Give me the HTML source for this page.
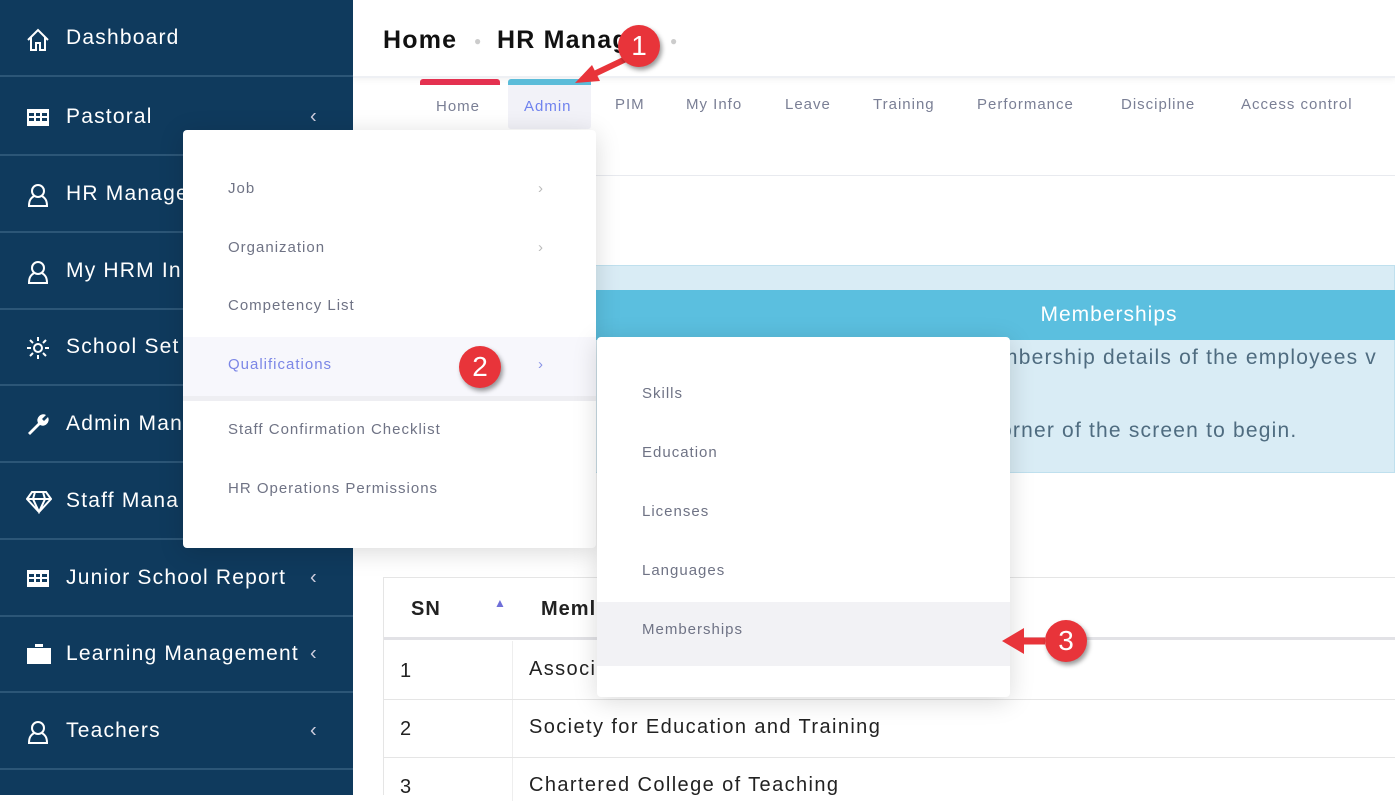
<!DOCTYPE html>
<html><head><meta charset="utf-8"><style>
*{margin:0;padding:0;box-sizing:border-box}
body{width:1395px;height:795px;overflow:hidden;background:#fff;font-family:"Liberation Sans",sans-serif;position:relative}
.sb{position:absolute;left:0;top:0;width:353px;height:795px;background:#0f3a5d}
.it{position:absolute;left:0;width:353px;height:77px;border-bottom:2px solid #2c5677;color:#fff;font-size:21px}
.it span{position:absolute;left:66px;top:50%;transform:translateY(-50%);letter-spacing:1.2px;white-space:nowrap}
.it i{position:absolute;left:26px;top:50%;transform:translateY(-50%);width:24px;height:22px}
.it b{position:absolute;left:310px;top:50%;transform:translateY(-50%);font-weight:normal;font-size:20px;color:#ccd}
.abs{position:absolute}
.tab{position:absolute;top:96px;font-size:15px;color:#7a7f95;letter-spacing:1px}
.dd{position:absolute;background:#fff;box-shadow:0 4px 25px rgba(0,0,0,.15);border-radius:4px}
.dd div{position:absolute;left:45px;font-size:15px;color:#6f7385;letter-spacing:1px}
.badge{position:absolute;width:42px;height:42px;border-radius:50%;background:#e8343a;color:#fff;font-size:28px;text-align:center;line-height:42px;box-shadow:2px 3px 5px rgba(0,0,0,.4)}
.row{font-size:20px;color:#222;letter-spacing:1.4px}
</style></head><body>
<div class="abs" style="left:353px;top:0;width:1042px;height:78px;border-bottom:2px solid #eef0f4;box-shadow:0 2px 6px rgba(0,0,0,.05)"></div>
<div class="abs" style="left:383px;top:26px;font-size:25px;font-weight:bold;color:#111;letter-spacing:1.2px">Home</div>
<div class="abs" style="left:474px;top:34px;color:#ccc;font-size:12px">●</div>
<div class="abs" style="left:497px;top:26px;font-size:25px;font-weight:bold;color:#111;letter-spacing:1.2px">HR Manag</div>
<div class="abs" style="left:670px;top:34px;color:#ccc;font-size:12px">●</div>
<div class="abs" style="left:420px;top:79px;width:80px;height:6px;background:#e43150;border-radius:3px 3px 0 0"></div>
<div class="abs" style="left:508px;top:79px;width:83px;height:50px;background:#f2f2f8;border-top:6px solid #5bbcd9;border-radius:3px"></div>
<div class="tab" style="left:436px;top:98px">Home</div>
<div class="tab" style="left:524px;top:98px;color:#6f82ee">Admin</div>
<div class="tab" style="left:615px">PIM</div>
<div class="tab" style="left:686px">My Info</div>
<div class="tab" style="left:785px">Leave</div>
<div class="tab" style="left:873px">Training</div>
<div class="tab" style="left:977px">Performance</div>
<div class="tab" style="left:1121px">Discipline</div>
<div class="tab" style="left:1241px">Access control</div>
<div class="abs" style="left:353px;top:175px;width:1042px;height:1px;background:#e8eaef"></div>
<div class="abs" style="left:383px;top:265px;width:1012px;height:208px;background:#d9ecf5;border:1px solid #bfe0ee"></div>
<div class="abs" style="left:383px;top:290px;width:1012px;height:50px;background:#5bbfdf;color:#fff;font-size:21px;text-align:center;line-height:50px;padding-left:440px;letter-spacing:1px">Memberships</div>
<div class="abs" style="left:1000px;top:346px;font-size:21px;color:#4f6c80;letter-spacing:1.2px;white-space:nowrap">mbership details of the employees v</div>
<div class="abs" style="left:1000px;top:419px;font-size:21px;color:#4f6c80;letter-spacing:1.2px">orner of the screen to begin.</div>
<div class="abs" style="left:383px;top:577px;width:1012px;height:218px;border-left:1px solid #e5e5e5;border-top:1px solid #e5e5e5">
<div class="abs" style="left:0;top:0;width:1012px;height:62px;border-bottom:3px solid #e2e2e6"></div>
<div class="abs" style="left:27px;top:20px;font-size:20px;font-weight:bold;color:#222;letter-spacing:1px">SN</div>
<div class="abs" style="left:110px;top:18px;color:#6f6fd8;font-size:12px">▲</div>
<div class="abs" style="left:157px;top:20px;font-size:20px;font-weight:bold;color:#222;letter-spacing:1px">Meml</div>
<div class="abs" style="left:128px;top:63px;width:1px;height:160px;background:#eee"></div>
<div class="abs row" style="left:16px;top:82px">1</div><div class="abs row" style="left:145px;top:80px">Associ</div>
<div class="abs" style="left:0;top:121px;width:1012px;height:1px;background:#e5e5e5"></div>
<div class="abs row" style="left:16px;top:140px">2</div><div class="abs row" style="left:145px;top:138px">Society for Education and Training</div>
<div class="abs" style="left:0;top:179px;width:1012px;height:1px;background:#e5e5e5"></div>
<div class="abs row" style="left:16px;top:198px">3</div><div class="abs row" style="left:145px;top:196px">Chartered College of Teaching</div>
</div>
<div class="sb">
<div class="it" style="top:0"><i><svg width="24" height="26" viewBox="0 0 24 26" fill="none" stroke="#fff" stroke-width="2"><path d="M2 13L12 3l10 10M5 10v13h5v-7h4v7h5V10"/></svg></i><span>Dashboard</span></div>
<div class="it" style="top:79px"><i><svg width="24" height="22" viewBox="0 0 24 22" fill="#fff"><path d="M1 3h22v17H1zM3 7v3h5V7zm7 0v3h4V7zm6 0v3h5V7zM3 12v3h5v-3zm7 0v3h4v-3zm6 0v3h5v-3z" fill-rule="evenodd"/></svg></i><span>Pastoral</span><b>‹</b></div>
<div class="it" style="top:156px"><i><svg width="24" height="26" viewBox="0 0 24 26" fill="none" stroke="#fff" stroke-width="2"><circle cx="12" cy="8" r="6"/><path d="M8 13c-3 2-5 4-5 10h18c0-6-2-8-5-10"/></svg></i><span>HR Manage</span></div>
<div class="it" style="top:233px"><i><svg width="24" height="26" viewBox="0 0 24 26" fill="none" stroke="#fff" stroke-width="2"><circle cx="12" cy="8" r="6"/><path d="M8 13c-3 2-5 4-5 10h18c0-6-2-8-5-10"/></svg></i><span>My HRM In</span></div>
<div class="it" style="top:309px"><i><svg width="24" height="24" viewBox="0 0 24 24" fill="none" stroke="#fff" stroke-width="2"><circle cx="12" cy="12" r="4"/><path d="M12 1v4M12 19v4M1 12h4M19 12h4M4 4l3 3M17 17l3 3M4 20l3-3M17 7l3-3"/></svg></i><span>School Set</span></div>
<div class="it" style="top:386px"><i><svg width="24" height="24" viewBox="0 0 24 24" fill="#fff"><path d="M2 20l10-10a6 6 0 0 1 8-8l-4 4 2 2 4-4a6 6 0 0 1-8 8L4 22z"/></svg></i><span>Admin Man</span></div>
<div class="it" style="top:463px"><i><svg width="26" height="24" viewBox="0 0 26 24" fill="none" stroke="#fff" stroke-width="2"><path d="M6 2h14l5 7-12 13L1 9zM1 9h24M9 2l-2 7 6 13 6-13-2-7"/></svg></i><span>Staff Mana</span></div>
<div class="it" style="top:540px"><i><svg width="24" height="22" viewBox="0 0 24 22" fill="#fff"><path d="M1 3h22v17H1zM3 7v3h5V7zm7 0v3h4V7zm6 0v3h5V7zM3 12v3h5v-3zm7 0v3h4v-3zm6 0v3h5v-3z" fill-rule="evenodd"/></svg></i><span>Junior School Report</span><b>‹</b></div>
<div class="it" style="top:616px"><i><svg width="26" height="22" viewBox="0 0 26 22" fill="#fff"><path d="M9 1h8v3H9zM1 5h24v16H1z"/></svg></i><span>Learning Management</span><b>‹</b></div>
<div class="it" style="top:693px"><i><svg width="24" height="26" viewBox="0 0 24 26" fill="none" stroke="#fff" stroke-width="2"><circle cx="12" cy="8" r="6"/><path d="M8 13c-3 2-5 4-5 10h18c0-6-2-8-5-10"/></svg></i><span>Teachers</span><b>‹</b></div>
</div>
<div class="dd" style="left:183px;top:130px;width:413px;height:418px">
<div style="top:50px">Job</div><div style="left:355px;top:50px;color:#bbb">›</div>
<div style="top:109px">Organization</div><div style="left:355px;top:109px;color:#bbb">›</div>
<div style="top:167px">Competency List</div>
<div style="left:0;top:207px;width:413px;height:64px;background:#f7f7fc;border-bottom:5px solid #eeeef2"></div>
<div style="top:226px;color:#7b86e6">Qualifications</div><div style="left:355px;top:226px;color:#8a94e6">›</div>
<div style="top:291px">Staff Confirmation Checklist</div>
<div style="top:350px">HR Operations Permissions</div>
</div>
<div class="dd" style="left:597px;top:337px;width:413px;height:360px">
<div style="top:48px">Skills</div>
<div style="top:107px">Education</div>
<div style="top:166px">Licenses</div>
<div style="top:225px">Languages</div>
<div style="left:0;top:265px;width:413px;height:64px;background:#f2f2f5"></div>
<div style="top:284px">Memberships</div>
</div>
<svg class="abs" style="left:570px;top:45px" width="80" height="45"><path d="M60 12L18 32" stroke="#e8343a" stroke-width="6"/><path d="M5 38L22 20L30 36Z" fill="#e8343a"/></svg>
<div class="badge" style="left:618px;top:25px">1</div>
<div class="badge" style="left:459px;top:346px">2</div>
<svg class="abs" style="left:1000px;top:622px" width="50" height="40"><path d="M45 19H20" stroke="#e8343a" stroke-width="7"/><path d="M2 19L24 6V32Z" fill="#e8343a"/></svg>
<div class="badge" style="left:1045px;top:620px">3</div>
</body></html>
